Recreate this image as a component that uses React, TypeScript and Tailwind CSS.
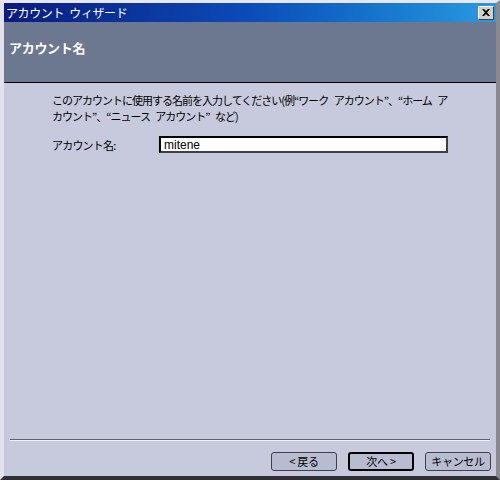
const font = { fontFamily: '"Noto Sans CJK JP", "Liberation Sans", sans-serif' };

const WizardButton = ({ label, primary = false }: { label: string; primary?: boolean }) => (
  <button
    className={
      'w-[66px] h-[19px] flex items-center justify-center rounded-[3px] bg-[#b8bcd0] text-[11px] leading-none text-black tracking-[-0.3px] ' +
      (primary ? 'border-2 border-black' : 'border border-[#404048]')
    }
  >
    {label}
  </button>
);

export default function App() {
  return (
    <div
      className="w-[500px] h-[480px] flex flex-col bg-[#d4d0c8] border-t-[3px] border-l-[4px] border-t-[#e8e6f0] border-l-[#e4e0ec] border-r-[4px] border-b-[4px] border-r-[#8a8890] border-b-[#303034]"
      style={font}
    >
      {/* title bar */}
      <div className="h-[19px] flex items-center justify-between pl-[2px] pr-[2px] bg-gradient-to-r from-[#0a1a80] via-[#0c4cb8] to-[#2a9ae0]">
        <span className="text-[12px] leading-none text-white tracking-[-0.4px] [word-spacing:3px]">アカウント ウィザード</span>
        <div className="w-[16px] h-[14px] flex items-center justify-center bg-[#d4d0c8] border border-t-white border-l-white border-r-[#404040] border-b-[#404040]">
          <svg width="8" height="7" viewBox="0 0 8 7">
            <path d="M0 0h2l2 2 2-2h2L5 3.5 8 7H6L4 5 2 7H0l3-3.5z" fill="#000" />
          </svg>
        </div>
      </div>

      {/* header panel */}
      <div className="h-[61px] bg-[#6c7890] border-b border-black pl-[5px] pt-[12px]">
        <span className="text-[13px] font-bold leading-none text-white tracking-[-0.3px]">アカウント名</span>
      </div>

      {/* body */}
      <div className="flex-1 flex flex-col bg-[#c6cadc]">
        <div className="pl-[48px] pt-[9px] text-[11px] leading-[16px] text-black tracking-[-0.8px] whitespace-nowrap">
          <p className="tracking-[-1px] [word-spacing:4px]">このアカウントに使用する名前を入力してください(例“ワーク アカウント”、“ホーム ア</p>
          <p className="tracking-[-1px] [word-spacing:4px]">カウント”、“ニュース アカウント” など)</p>
          <div className="flex items-center mt-[12px]">
            <span className="w-[107px]">アカウント名:</span>
            <div className="w-[289px] h-[17px] bg-white border-2 border-black border-r-[#404040] border-b-[#404040] flex items-center pl-[3px] leading-none text-[12px] tracking-normal" style={{ fontFamily: '"Liberation Sans", sans-serif' }}>
              mitene
            </div>
          </div>
        </div>

        <div className="flex-1" />

        <div className="mx-[6px] border-t border-[#5c6070] border-b border-b-[#eceef8]" />

        <div className="flex justify-end gap-[11px] pt-[11px] pb-[5px] pr-[5px]">
          <WizardButton label="< 戻る" />
          <WizardButton label="次へ >" primary />
          <WizardButton label="キャンセル" />
        </div>
      </div>
    </div>
  );
}
